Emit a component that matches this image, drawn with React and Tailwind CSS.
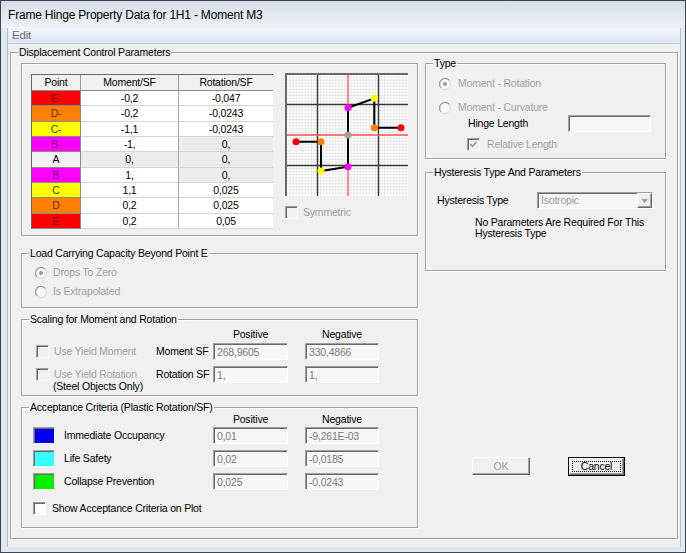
import React from "react";

const sunken =
  "border border-t-[#a0a0a0] border-l-[#a0a0a0] border-r-white border-b-white shadow-[inset_1px_1px_0_#696969]";
const raised =
  "border border-t-white border-l-white border-r-[#696969] border-b-[#696969] shadow-[inset_-1px_-1px_0_#a0a0a0]";

function Group({ title, className = "", children }) {
  return (
    <div
      className={
        "relative shrink-0 border border-[#a0a0a0] shadow-[inset_1px_1px_0_#ffffff,1px_1px_0_#ffffff] " +
        className
      }
    >
      {title && (
        <div className="absolute left-[7px] top-[-8px] bg-[#f0f0f0] px-[1px] leading-[14px] whitespace-nowrap">
          {title}
        </div>
      )}
      {children}
    </div>
  );
}

function Radio({ checked }) {
  return (
    <svg width="12" height="12" viewBox="0 0 12 12" className="shrink-0">
      <circle cx="6" cy="6" r="5.5" fill="#f6f6f6" stroke="#d8d8d8" />
      <path d="M2.11 9.89 A5.5 5.5 0 0 1 9.89 2.11" fill="none" stroke="#9a9a9a" strokeWidth="1.2" />
      {checked && <circle cx="6" cy="6" r="2" fill="#9a9a9a" />}
    </svg>
  );
}

function Check({ checked, enabled }) {
  return (
    <div
      className={
        "w-[13px] h-[13px] shrink-0 flex items-center justify-center " +
        sunken +
        " " +
        (enabled ? "bg-white" : "bg-[#f0f0f0]")
      }
    >
      {checked && (
        <svg width="9" height="9" viewBox="0 0 9 9">
          <path d="M1.5 4.2 L3.5 6.3 L7.5 1.8" fill="none" stroke="#9a9a9a" strokeWidth="1.7" />
        </svg>
      )}
    </div>
  );
}

function Field({ value, w = "w-[75px]" }) {
  return (
    <div
      className={
        "h-[17px] shrink-0 flex items-center pl-[3px] pt-[1px] text-[#7a7a7a] bg-[#f7f7f7] " +
        w +
        " " +
        sunken
      }
    >
      {value}
    </div>
  );
}

const rows = [
  { p: "E-", bg: "bg-[#ff0000]", tc: "text-[#7a0000]", m: "-0,2", r: "-0,047" },
  { p: "D-", bg: "bg-[#ff8000]", tc: "text-[#5c2a00]", m: "-0,2", r: "-0,0243" },
  { p: "C-", bg: "bg-[#ffff00]", tc: "text-[#404000]", m: "-1,1", r: "-0,0243" },
  { p: "B-", bg: "bg-[#ff00ff]", tc: "text-[#7a007a]", m: "-1,", r: "0,", rg: true },
  { p: "A", bg: "bg-[#f2f2f2]", tc: "text-black", m: "0,", r: "0,", mg: true, rg: true },
  { p: "B", bg: "bg-[#ff00ff]", tc: "text-[#7a007a]", m: "1,", r: "0,", rg: true },
  { p: "C", bg: "bg-[#ffff00]", tc: "text-[#404000]", m: "1,1", r: "0,025" },
  { p: "D", bg: "bg-[#ff8000]", tc: "text-[#5c2a00]", m: "0,2", r: "0,025" },
  { p: "E", bg: "bg-[#ff0000]", tc: "text-[#7a0000]", m: "0,2", r: "0,05" },
];

function Table() {
  return (
    <div className="w-[242px] shrink-0 border-t border-l border-[#6a6a6a] bg-white">
      <div className="flex h-[16px] bg-[#f0f0f0] border-b border-[#8a8a8a]">
        <div className="w-[49px] flex items-center justify-center border-r border-[#9a9a9a]">Point</div>
        <div className="w-[98px] flex items-center justify-center border-r border-[#9a9a9a]">Moment/SF</div>
        <div className="w-[94px] flex items-center justify-center">Rotation/SF</div>
      </div>
      {rows.map((r) => (
        <div key={r.p} className="flex h-[15.33px]">
          <div
            className={
              "w-[49px] flex items-center justify-center border-r border-b border-[#8a8a8a] " + r.bg + " " + r.tc
            }
          >
            {r.p}
          </div>
          <div
            className={
              "w-[98px] flex items-center justify-center border-r border-b border-r-[#a8a8a8] border-b-[#d4d4d4] " +
              (r.mg ? "bg-[#ececec]" : "bg-white")
            }
          >
            {r.m}
          </div>
          <div
            className={
              "w-[94px] flex items-center justify-center border-b border-b-[#d4d4d4] " +
              (r.rg ? "bg-[#ececec]" : "bg-white")
            }
          >
            {r.r}
          </div>
        </div>
      ))}
    </div>
  );
}

function Plot() {
  const minor = [];
  for (let i = -20; i <= 20; i++) {
    const x = 61 + i * 3.05;
    const y = 60 + i * 3.05;
    if (x > 0 && x < 121) minor.push(<line key={"x" + i} x1={x} y1="0" x2={x} y2="121" stroke="#e9e9e9" strokeWidth="1" />);
    if (y > 0 && y < 121) minor.push(<line key={"y" + i} x1="0" y1={y} x2="121" y2={y} stroke="#e9e9e9" strokeWidth="1" />);
  }
  const P = {
    A: [61, 60],
    B: [61, 32.7],
    C: [87.3, 23.3],
    D: [87.3, 52.7],
    E: [114, 52.7],
    Bn: [61, 91.7],
    Cn: [34, 96],
    Dn: [34, 66.7],
    En: [9, 66.7],
  };
  const pts = (a) => a.map((k) => P[k].join(",")).join(" ");
  return (
    <div className="w-[123px] h-[123px] shrink-0 border-l-2 border-t-2 border-l-[#6a6a6a] border-t-[#6a6a6a] bg-white">
      <svg width="121" height="121" viewBox="0 0 121 121" className="block">
        {minor}
        <line x1="30.5" y1="0" x2="30.5" y2="121" stroke="#3a3a3a" strokeWidth="1.5" />
        <line x1="91.5" y1="0" x2="91.5" y2="121" stroke="#3a3a3a" strokeWidth="1.5" />
        <line x1="0" y1="29.5" x2="121" y2="29.5" stroke="#3a3a3a" strokeWidth="1.5" />
        <line x1="0" y1="90.5" x2="121" y2="90.5" stroke="#3a3a3a" strokeWidth="1.5" />
        <line x1="61" y1="0" x2="61" y2="121" stroke="#ff5050" strokeWidth="1.3" />
        <line x1="0" y1="60" x2="121" y2="60" stroke="#ff5050" strokeWidth="1.3" />
        <polyline points={pts(["A", "B", "C", "D", "E"])} fill="none" stroke="#000" strokeWidth="2" />
        <polyline points={pts(["A", "Bn", "Cn", "Dn", "En"])} fill="none" stroke="#000" strokeWidth="2" />
        <circle cx={P.A[0]} cy={P.A[1]} r="3.5" fill="#a0a0a0" />
        <circle cx={P.B[0]} cy={P.B[1]} r="3.5" fill="#ff00ff" />
        <circle cx={P.Bn[0]} cy={P.Bn[1]} r="3.5" fill="#ff00ff" />
        <circle cx={P.C[0]} cy={P.C[1]} r="3.5" fill="#ffff00" />
        <circle cx={P.Cn[0]} cy={P.Cn[1]} r="3.5" fill="#ffff00" />
        <circle cx={P.D[0]} cy={P.D[1]} r="3.5" fill="#ff8000" />
        <circle cx={P.Dn[0]} cy={P.Dn[1]} r="3.5" fill="#ff8000" />
        <circle cx={P.E[0]} cy={P.E[1]} r="3.5" fill="#ff0000" />
        <circle cx={P.En[0]} cy={P.En[1]} r="3.5" fill="#ff0000" />
      </svg>
    </div>
  );
}

function ColHeads() {
  return (
    <div className="flex h-[12px] items-center">
      <div className="ml-[191px] w-[75px] text-center">Positive</div>
      <div className="ml-[17px] w-[74px] text-center">Negative</div>
    </div>
  );
}

export default function App() {
  return (
    <div className="w-[686px] h-[553px] overflow-hidden border border-[#3c4550] bg-[#dfe6ee] flex flex-col font-[Liberation_Sans,Arial,sans-serif] text-[10.5px] tracking-[-0.2px] text-black leading-none">
      {/* title bar */}
      <div className="h-[27px] shrink-0 flex items-center pl-[7px] text-[12px] bg-gradient-to-b from-[#d5dce4] via-[#e2e8ee] to-[#eef2f6]">
        Frame Hinge Property Data for 1H1 - Moment M3
      </div>
      <div className="flex flex-1 min-h-0">
        <div className="w-[6px] shrink-0 bg-[#e2e8ef]" />
        <div className="w-[674px] shrink-0 flex flex-col border-x border-[#b4bfcc]">
          {/* menu */}
          <div className="h-[16px] shrink-0 flex items-center pl-[4px] text-[11.5px] text-[#6d6d6d] bg-gradient-to-b from-[#f2f6fb] to-[#dde6f2] border-b border-[#c3d0e0]">
            Edit
          </div>
          {/* body */}
          <div className="flex-1 bg-[#f0f0f0] pt-[8px] pl-[2px]">
            <Group title="Displacement Control Parameters" className="w-[668px] h-[487px]">
              <div className="flex pl-[10px] pt-[10px]">
                {/* left column */}
                <div className="w-[397px] shrink-0 flex flex-col">
                  <Group className="h-[173px]">
                    <div className="flex pl-[9px] pt-[10px]">
                      <Table />
                      <div className="ml-[12px] mt-[-1px] flex flex-col">
                        <Plot />
                        <div className="mt-[10px] flex items-center">
                          <Check />
                          <span className="ml-[5px] text-[#a0a0a0]">Symmetric</span>
                        </div>
                      </div>
                    </div>
                  </Group>

                  <Group title="Load Carrying Capacity Beyond Point E" className="h-[55px] mt-[17px]">
                    <div className="flex flex-col pl-[13px] pt-[12px] text-[#a0a0a0]">
                      <div className="flex items-center h-[13px]">
                        <Radio checked />
                        <span className="ml-[6px]">Drops To Zero</span>
                      </div>
                      <div className="flex items-center h-[13px] mt-[6px]">
                        <Radio />
                        <span className="ml-[6px]">Is Extrapolated</span>
                      </div>
                    </div>
                  </Group>

                  <Group title="Scaling for Moment and Rotation" className="h-[77px] mt-[11px]">
                    <div className="flex flex-col pt-[8px]">
                      <ColHeads />
                      <div className="flex items-center h-[17px] mt-[3px]">
                        <div className="w-[134px] pl-[14px] flex items-center">
                          <Check />
                          <span className="ml-[5px] text-[#a0a0a0]">Use Yield Moment</span>
                        </div>
                        <div className="w-[57px]">Moment SF</div>
                        <Field value="268,9605" />
                        <div className="ml-[17px]">
                          <Field value="330,4866" w="w-[74px]" />
                        </div>
                      </div>
                      <div className="flex items-start h-[17px] mt-[6px]">
                        <div className="w-[134px] pl-[14px] flex flex-col">
                          <div className="flex items-center h-[17px]">
                            <Check />
                            <span className="ml-[5px] text-[#a0a0a0]">Use Yield Rotation</span>
                          </div>
                          <div className="pl-[17px] mt-[-2px]">(Steel Objects Only)</div>
                        </div>
                        <div className="w-[57px] h-[17px] flex items-center">Rotation SF</div>
                        <Field value="1," />
                        <div className="ml-[17px]">
                          <Field value="1," w="w-[74px]" />
                        </div>
                      </div>
                    </div>
                  </Group>

                  <Group title="Acceptance Criteria (Plastic Rotation/SF)" className="h-[121px] mt-[11px]">
                    <div className="flex flex-col pt-[5px]">
                      <ColHeads />
                      {[
                        ["bg-[#0000f0]", "Immediate Occupancy", "0,01", "-9,261E-03", "mt-[2px]"],
                        ["bg-[#33ffff]", "Life Safety", "0,02", "-0,0185", "mt-[6px]"],
                        ["bg-[#00f000]", "Collapse Prevention", "0,025", "-0,0243", "mt-[6px]"],
                      ].map(([c, l, a, b, mt]) => (
                        <div key={l} className={"flex items-center h-[17px] " + mt}>
                          <div className={"ml-[11px] w-[22px] h-[17px] shrink-0 " + c + " " + sunken} />
                          <div className="ml-[9px] w-[149px]">{l}</div>
                          <Field value={a} />
                          <div className="ml-[17px]">
                            <Field value={b} w="w-[74px]" />
                          </div>
                        </div>
                      ))}
                      <div className="flex items-center mt-[12px] pl-[11px]">
                        <Check enabled />
                        <span className="ml-[6px]">Show Acceptance Criteria on Plot</span>
                      </div>
                    </div>
                  </Group>
                </div>

                {/* right column */}
                <div className="ml-[7px] w-[241px] shrink-0 flex flex-col">
                  <Group title="Type" className="h-[96px]">
                    <div className="flex flex-col pl-[13px] pt-[13px]">
                      <div className="flex items-center h-[13px] text-[#a0a0a0]">
                        <Radio checked />
                        <span className="ml-[7px]">Moment - Rotation</span>
                      </div>
                      <div className="flex items-center h-[13px] mt-[11px] text-[#a0a0a0]">
                        <Radio />
                        <span className="ml-[7px]">Moment - Curvature</span>
                      </div>
                      <div className="flex items-center h-[17px] mt-[1px]">
                        <div className="ml-[29px] w-[100px]">Hinge Length</div>
                        <Field value="" w="w-[83px]" />
                      </div>
                      <div className="flex items-center mt-[6px] ml-[28px]">
                        <Check checked />
                        <span className="ml-[7px] text-[#a0a0a0]">Relative Length</span>
                      </div>
                    </div>
                  </Group>

                  <Group title="Hysteresis Type And Parameters" className="h-[99px] mt-[13px]">
                    <div className="flex flex-col pl-[11px] pt-[19px]">
                      <div className="flex items-center h-[17px]">
                        <div className="w-[100px]">Hysteresis Type</div>
                        <div className={"w-[116px] h-[17px] flex items-center bg-[#f7f7f7] " + sunken}>
                          <span className="flex-1 pl-[3px] text-[#9a9a9a]">Isotropic</span>
                          <div className={"w-[15px] h-[15px] flex items-center justify-center bg-[#f0f0f0] " + raised}>
                            <svg width="7" height="4" viewBox="0 0 7 4">
                              <path d="M0 0 L7 0 L3.5 4 Z" fill="#a0a0a0" />
                            </svg>
                          </div>
                        </div>
                      </div>
                      <div className="ml-[38px] mt-[8px] leading-[11px]">
                        No Parameters Are Required For This
                        <br />
                        Hysteresis Type
                      </div>
                    </div>
                  </Group>

                  <div className="flex mt-[186px]">
                    <div className={"ml-[47px] w-[58px] h-[18px] flex items-center justify-center text-[#a0a0a0] bg-[#f0f0f0] " + raised}>
                      OK
                    </div>
                    <div className="ml-[38px] w-[57px] h-[19px] border border-black">
                      <div className={"w-full h-full flex p-[2px] bg-[#f0f0f0] " + raised}>
                        <div className="flex-1 flex items-center justify-center border border-dotted border-black">
                          Cancel
                        </div>
                      </div>
                    </div>
                  </div>
                </div>
              </div>
            </Group>
          </div>
        </div>
        <div className="w-[4px] shrink-0 bg-[#e2e8ef]" />
      </div>
      <div className="h-[5px] shrink-0 bg-[#e2e8ef]" />
    </div>
  );
}
